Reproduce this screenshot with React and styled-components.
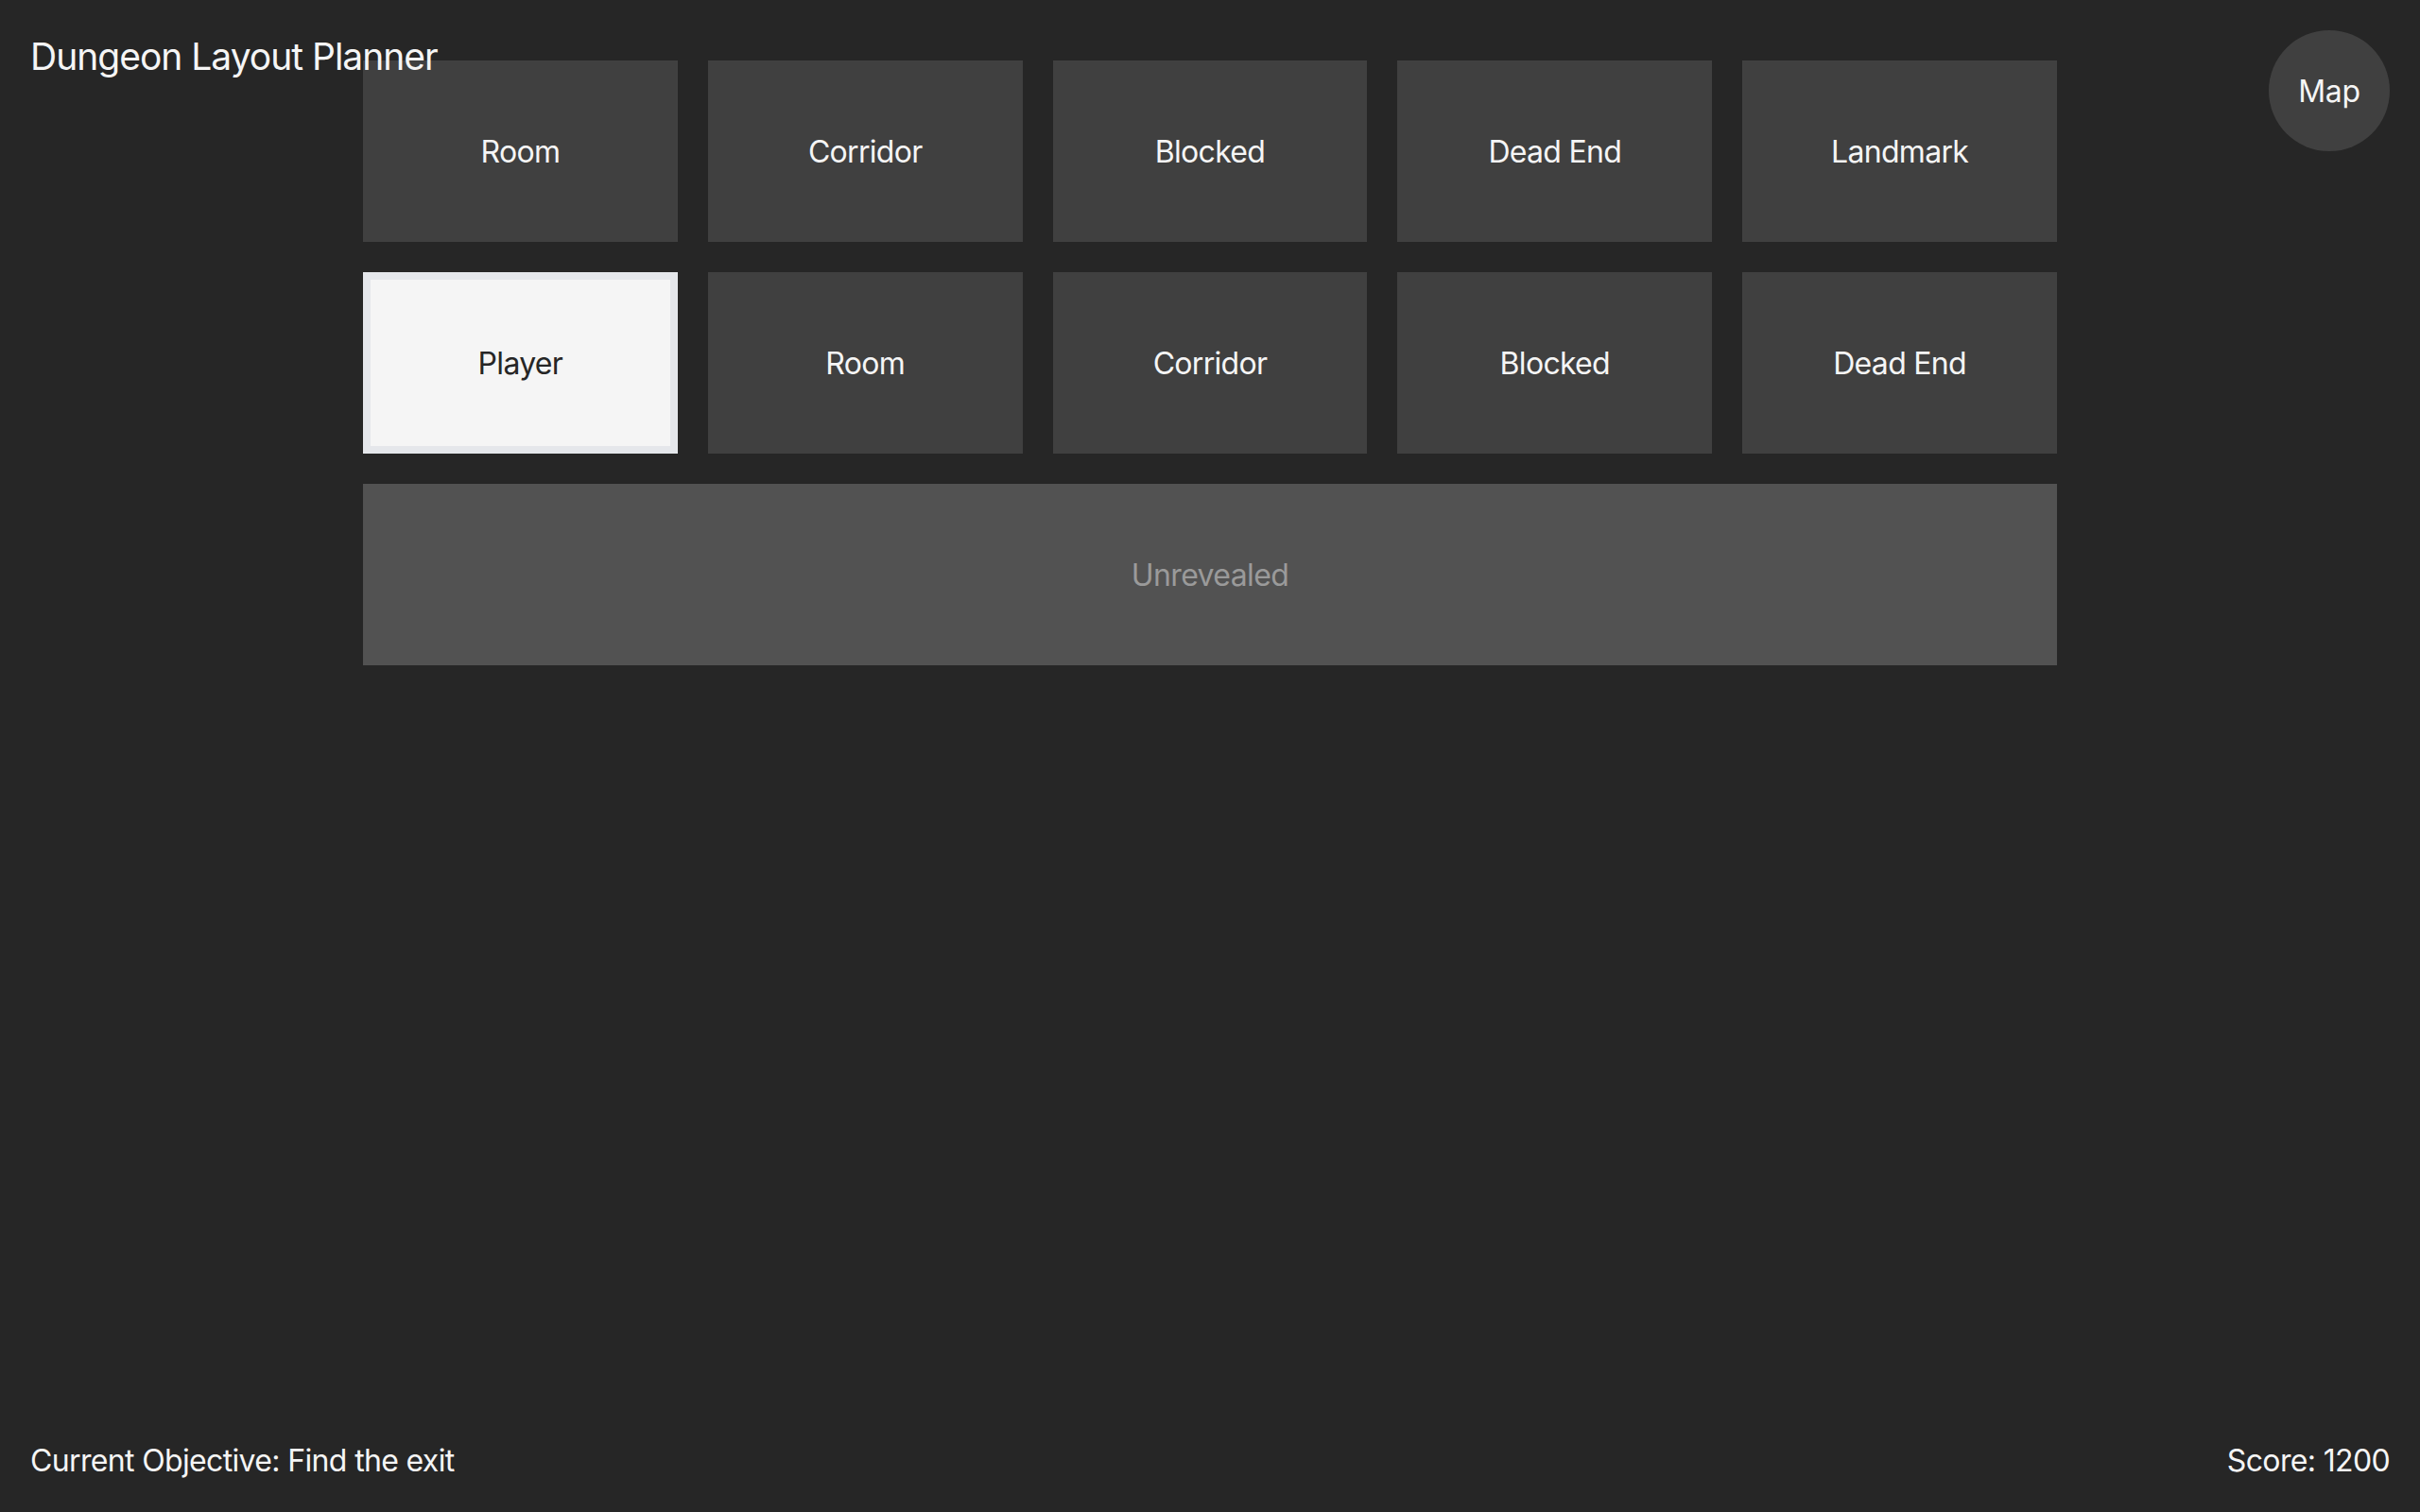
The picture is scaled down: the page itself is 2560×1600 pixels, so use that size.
import styled, { createGlobalStyle } from 'styled-components';

const GlobalStyle = createGlobalStyle`
  html, body {
    margin: 0;
    padding: 0;
    background: #262626;
  }
  * {
    box-sizing: border-box;
  }
`;

const tiles = [
  { label: 'Room' },
  { label: 'Corridor' },
  { label: 'Blocked' },
  { label: 'Dead End' },
  { label: 'Landmark' },
  { label: 'Player', active: true },
  { label: 'Room' },
  { label: 'Corridor' },
  { label: 'Blocked' },
  { label: 'Dead End' },
];

const App = () => {
  return (
    <Page>
      <GlobalStyle />
      <Title>Dungeon Layout Planner</Title>
      <MapButton>Map</MapButton>
      <Grid>
        {tiles.map((tile, i) => (
          <Tile key={i} $active={tile.active}>
            {tile.label}
          </Tile>
        ))}
        <Unrevealed>Unrevealed</Unrevealed>
      </Grid>
      <Footer>
        <FooterText>Current Objective: Find the exit</FooterText>
        <FooterText>Score: 1200</FooterText>
      </Footer>
    </Page>
  );
};

export default App;

// Estilos
const Page = styled.div`
  position: relative;
  min-height: 100vh;
  display: flex;
  flex-direction: column;
  padding-top: 64px;
  background: #262626;
  color: #f5f5f5;
  font-family: Inter, 'Noto Sans', sans-serif;
`;

const Title = styled.h1`
  position: absolute;
  top: 37px;
  left: 32px;
  margin: 0;
  font-size: 39px;
  font-weight: 400;
  line-height: 1.2;
  letter-spacing: -1px;
  color: #f5f5f5;
`;

const MapButton = styled.button`
  position: absolute;
  top: 32px;
  right: 32px;
  width: 128px;
  height: 128px;
  border: none;
  border-radius: 50%;
  background: #404040;
  color: #f5f5f5;
  font-family: inherit;
  font-size: 32px;
  letter-spacing: -0.4px;
  cursor: pointer;
`;

const Grid = styled.div`
  width: 70%;
  margin: 0 auto;
  display: grid;
  grid-template-columns: repeat(5, 1fr);
  grid-auto-rows: 192px;
  gap: 32px;
`;

const Tile = styled.div`
  display: flex;
  align-items: center;
  justify-content: center;
  font-size: 32px;
  letter-spacing: -0.7px;
  background: ${p => (p.$active ? '#f5f5f5' : '#404040')};
  color: ${p => (p.$active ? '#262626' : '#f5f5f5')};
  border: ${p => (p.$active ? '8px solid #e5e7eb' : 'none')};
`;

const Unrevealed = styled.div`
  grid-column: 1 / -1;
  display: flex;
  align-items: center;
  justify-content: center;
  font-size: 32px;
  letter-spacing: -0.6px;
  background: #525252;
  color: #9a9a9a;
`;

const Footer = styled.footer`
  margin-top: auto;
  display: flex;
  justify-content: space-between;
  align-items: flex-end;
  padding: 0 32px 35px;
`;

const FooterText = styled.span`
  font-size: 32px;
  line-height: 1.2;
  letter-spacing: -0.65px;
`;
